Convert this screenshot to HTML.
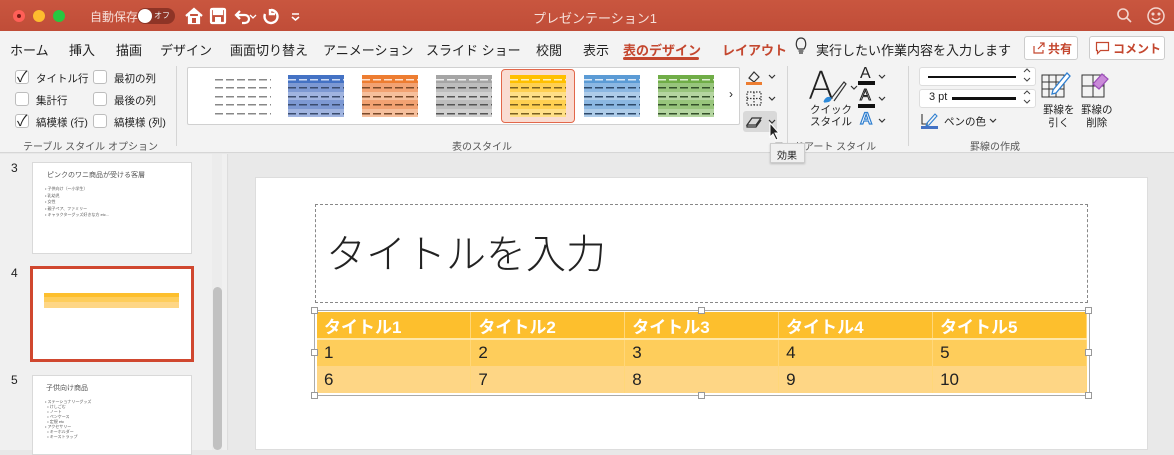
<!DOCTYPE html>
<html><head><meta charset="utf-8"><style>
*{box-sizing:border-box;margin:0;padding:0}
body{width:1174px;height:450px;overflow:hidden;position:relative;background:#e8e8e8;font-family:"Liberation Sans","Noto Sans CJK JP",sans-serif;color:#222}
.a{position:absolute}
.tb{left:0;top:0;width:1174px;height:31px;background:linear-gradient(#c9563f,#c04d38)}
.dot{width:12px;height:12px;border-radius:50%;top:10px}
.tabs{left:0;top:31px;width:1174px;height:33px;background:#f3f3f3}
.t{font-size:13px;top:40px;white-space:nowrap}
.rib{left:0;top:62px;width:1174px;height:91px;background:#f3f3f3;border-bottom:1px solid #d6d6d6}
.cb{width:14px;height:14px;border:1px solid #bdbdbd;border-radius:3px;background:#fff}
.sm{font-size:10.5px;white-space:nowrap}
.gl{font-size:10px;color:#555;top:138px;white-space:nowrap}
.th{position:absolute;top:75px;width:56px;height:42px}
.th div{height:8.4px;background-image:repeating-linear-gradient(90deg,var(--d) 0 8px,transparent 8px 11px);background-size:100% 1.5px;background-repeat:no-repeat;background-position:0 4px}
.vs{width:1px;background:#d5d5d5}
.tbl td{height:27px;padding:0 7px;font-size:17px;border-right:1px solid #ffd779;width:154px}
.h{width:7px;height:7px;background:#fff;border:1px solid #999;position:absolute}
</style></head><body>
<div class="a tb"></div>
<div class="a dot" style="left:13px;background:#ff5f57"></div>
<div class="a" style="left:17px;top:14px;width:4px;height:4px;border-radius:50%;background:#7a1b15"></div>
<div class="a dot" style="left:33px;background:#febc2e"></div>
<div class="a dot" style="left:53px;background:#28c840"></div>
<div class="a sm" style="left:90px;top:8px;color:#f6ddd7;font-size:12px">自動保存</div>
<div class="a" style="left:137px;top:8px;width:38px;height:16px;border-radius:8px;background:#8e3426"></div>
<div class="a" style="left:138px;top:9px;width:14px;height:14px;border-radius:50%;background:#fff"></div>
<div class="a" style="left:154px;top:10px;font-size:8px;color:#eee">オフ</div>
<svg class="a" style="left:184px;top:6px" width="130" height="20" viewBox="0 0 130 20" fill="none" stroke="#fff" stroke-width="2.2">
<path d="M2 10 L10 3 L18 10 M5 8 V17 H15 V8" fill="#fff" stroke="#fff"/><rect x="8" y="12" width="4" height="5" fill="#c4503b" stroke="none"/>
<rect x="27" y="3" width="14" height="14" rx="1"/><rect x="30" y="3" width="8" height="5" fill="#fff"/><rect x="31" y="11" width="6" height="6" fill="#fff" stroke="none"/>
<path d="M56 5 L52 9 L56 13 M52 9 H61 A4 4 0 0 1 61 17 H58"/><path d="M66 9 l3 3 l3-3" stroke-width="1.3"/>
<path d="M87 4 A6.5 6.5 0 1 1 81 8 M86 3 V8 H91" stroke-width="2.4"/>
<path d="M108 8 h7 M108 11 l3.5 3 l3.5-3" stroke-width="1.6"/>
</svg>
<div class="a" style="left:533px;top:8px;font-size:13px;color:#f6e0da">プレゼンテーション1</div>
<svg class="a" style="left:1115px;top:6px" width="20" height="20" fill="none" stroke="#f3d6cf" stroke-width="1.6"><circle cx="8" cy="8" r="5"/><path d="M12 12 l4 4"/></svg>
<svg class="a" style="left:1144px;top:4px" width="24" height="24" fill="none" stroke="#f3d6cf" stroke-width="1.5"><circle cx="12" cy="12" r="8"/><circle cx="9" cy="10" r=".8" fill="#f3d6cf"/><circle cx="15" cy="10" r=".8" fill="#f3d6cf"/><path d="M8 14 q4 4 8 0"/></svg>

<div class="a tabs"></div>
<div class="a t" style="left:10px">ホーム</div>
<div class="a t" style="left:69px">挿入</div>
<div class="a t" style="left:116px">描画</div>
<div class="a t" style="left:160px">デザイン</div>
<div class="a t" style="left:230px">画面切り替え</div>
<div class="a t" style="left:323px">アニメーション</div>
<div class="a t" style="left:426px">スライド ショー</div>
<div class="a t" style="left:536px">校閲</div>
<div class="a t" style="left:583px">表示</div>
<div class="a t" style="left:623px;color:#c4472f;font-weight:bold">表のデザイン</div>
<div class="a" style="left:623px;top:57px;width:76px;height:3px;background:#c4472f;border-radius:2px"></div>
<div class="a t" style="left:722px;color:#c4472f;font-weight:bold">レイアウト</div>
<svg class="a" style="left:794px;top:36px" width="14" height="20" fill="none" stroke="#333" stroke-width="1.2"><path d="M4 13 C1 9 2 2 7 2 C12 2 13 9 10 13 Z M4.5 15 h5 M5 17 h4"/></svg>
<div class="a t" style="left:816px">実行したい作業内容を入力します</div>
<div class="a" style="left:1024px;top:36px;width:54px;height:24px;border:1px solid #ccc;border-radius:3px;background:#fff"></div>
<div class="a" style="left:1048px;top:40px;font-size:12px;color:#c4472f;font-weight:bold">共有</div>
<svg class="a" style="left:1032px;top:41px" width="14" height="14" fill="none" stroke="#c4472f" stroke-width="1.2"><path d="M2 5 v7 h9 v-3 M6 8 l6-6 M8 2 h4 v4"/></svg>
<div class="a" style="left:1089px;top:36px;width:76px;height:24px;border:1px solid #ccc;border-radius:3px;background:#fff"></div>
<svg class="a" style="left:1095px;top:41px" width="16" height="14" fill="none" stroke="#c4472f" stroke-width="1.2"><path d="M1.5 1.5 h12 v8 h-8 l-3 3 v-3 h-1 z"/></svg>
<div class="a" style="left:1113px;top:40px;font-size:12px;color:#c4472f;font-weight:bold">コメント</div>

<div class="a rib"></div>
<div class="a cb" style="left:15px;top:70px"></div><div class="a" style="left:17px;top:66px;font-size:15px">✓</div>
<div class="a sm" style="left:36px;top:71px">タイトル行</div>
<div class="a cb" style="left:15px;top:92px"></div><div class="a sm" style="left:36px;top:93px">集計行</div>
<div class="a cb" style="left:15px;top:114px"></div><div class="a" style="left:17px;top:110px;font-size:15px">✓</div>
<div class="a sm" style="left:36px;top:115px">縞模様 (行)</div>
<div class="a cb" style="left:93px;top:70px"></div><div class="a sm" style="left:114px;top:71px">最初の列</div>
<div class="a cb" style="left:93px;top:92px"></div><div class="a sm" style="left:114px;top:93px">最後の列</div>
<div class="a cb" style="left:93px;top:114px"></div><div class="a sm" style="left:114px;top:115px">縞模様 (列)</div>
<div class="a gl" style="left:23px">テーブル スタイル オプション</div>
<div class="a vs" style="left:176px;top:66px;height:80px"></div>
<div class="a" style="left:187px;top:67px;width:553px;height:58px;background:#fff;border:1px solid #d0d0d0;border-radius:2px"></div>
<div class="a" style="left:501px;top:69px;width:74px;height:54px;background:#f9dcd2;border:1px solid #e2674a;border-radius:4px"></div>
<div class="th" style="left:215px;--d:#888"><div></div><div></div><div></div><div></div><div></div></div>
<div class="th" style="left:288px;--d:#3a4c6e;background:#7391d0"><div style="background-color:#4472c4;--d:#cfdcf5"></div><div style="background-color:#7d99d3"></div><div style="background-color:#a0b4e0"></div><div style="background-color:#7d99d3"></div><div style="background-color:#a0b4e0"></div></div>
<div class="th" style="left:362px;--d:#7a4a2a"><div style="background-color:#ed7d31;--d:#fde1cf"></div><div style="background-color:#f2a272"></div><div style="background-color:#f6bf9c"></div><div style="background-color:#f2a272"></div><div style="background-color:#f6bf9c"></div></div>
<div class="th" style="left:436px;--d:#555"><div style="background-color:#a5a5a5;--d:#eee"></div><div style="background-color:#bdbdbd"></div><div style="background-color:#d0d0d0"></div><div style="background-color:#bdbdbd"></div><div style="background-color:#d0d0d0"></div></div>
<div class="th" style="left:510px;--d:#7a6020"><div style="background-color:#ffc000;--d:#fff1c0"></div><div style="background-color:#ffd051"></div><div style="background-color:#ffdf87"></div><div style="background-color:#ffd051"></div><div style="background-color:#ffdf87"></div></div>
<div class="th" style="left:584px;--d:#2e4a6a"><div style="background-color:#5b9bd5;--d:#dbe9f7"></div><div style="background-color:#8bb7e2"></div><div style="background-color:#aecce9"></div><div style="background-color:#8bb7e2"></div><div style="background-color:#aecce9"></div></div>
<div class="th" style="left:658px;--d:#33502a"><div style="background-color:#70ad47;--d:#e0f0d6"></div><div style="background-color:#98c57c"></div><div style="background-color:#b4d5a0"></div><div style="background-color:#98c57c"></div><div style="background-color:#b4d5a0"></div></div>
<div class="a" style="left:729px;top:87px;font-size:12px">›</div>
<div class="a gl" style="left:452px">表のスタイル</div>
<svg class="a" style="left:744px;top:67px" width="36" height="66" fill="none" stroke="#333" stroke-width="1.2">
<path d="M5 11 l5-6 l5 5 l-5 5 z"/><rect x="2" y="15" width="16" height="3" fill="#ed7d31" stroke="none"/>
<path d="M25 8 l3 3 l3-3"/>
<rect x="3" y="25" width="14" height="13" stroke-dasharray="1.5 1.5"/><path d="M10 25 v13 M3 31.5 h14" stroke-dasharray="1.5 1.5"/>
<path d="M25 30 l3 3 l3-3"/>
</svg>
<div class="a" style="left:743px;top:111px;width:34px;height:21px;background:#d9d9d9;border-radius:3px"></div>
<svg class="a" style="left:744px;top:111px" width="36" height="22" fill="none" stroke="#333" stroke-width="1.2"><path d="M3 14 l5-7 h9 l-5 7 z M3 14 v2 h9 l5-7"/><path d="M25 9 l3 3 l3-3"/></svg>
<div class="a vs" style="left:787px;top:66px;height:80px"></div>
<div class="a" style="left:808px;top:64px;font-size:38px;font-weight:300;color:#222;font-family:'DejaVu Sans',sans-serif">A</div>
<svg class="a" style="left:820px;top:78px" width="40" height="26" fill="none" stroke="#333" stroke-width="1.2"><path d="M10 22 l14-18 l2 2 l-12 17" /><path d="M4 24 q2-6 7-4 q0 4-7 4" fill="#2f8ad8" stroke="#2f8ad8"/><path d="M31 8 l3 3 l3-3"/></svg>
<div class="a sm" style="left:810px;top:104px;text-align:center;line-height:12px">クイック<br>スタイル</div>
<div class="a" style="left:860px;top:65px;font-size:16px">A</div><div class="a" style="left:858px;top:81px;width:17px;height:4px;background:#111"></div>
<div class="a" style="left:860px;top:87px;font-size:16px;color:#fff;-webkit-text-stroke:1px #222">A</div><div class="a" style="left:858px;top:104px;width:17px;height:4px;background:#111"></div>
<div class="a" style="left:860px;top:109px;font-size:17px;font-weight:bold;color:#fff;-webkit-text-stroke:1.2px #2f7fd0">A</div>
<svg class="a" style="left:876px;top:68px" width="14" height="60" fill="none" stroke="#333" stroke-width="1.2"><path d="M3 7 l3 3 l3-3 M3 29 l3 3 l3-3 M3 51 l3 3 l3-3"/></svg>
<div class="a gl" style="left:774px">ワードアート スタイル</div>
<div class="a vs" style="left:908px;top:66px;height:80px"></div>
<div class="a" style="left:919px;top:67px;width:117px;height:19px;background:#fff;border:1px solid #ddd;border-radius:3px"></div>
<div class="a" style="left:928px;top:76px;width:88px;height:2px;background:#111"></div>
<div class="a" style="left:919px;top:89px;width:117px;height:19px;background:#fff;border:1px solid #ddd;border-radius:3px"></div>
<div class="a" style="left:929px;top:91px;font-size:11px">3 pt</div>
<div class="a" style="left:952px;top:97px;width:64px;height:3px;background:#111"></div>
<svg class="a" style="left:1020px;top:67px" width="14" height="42" fill="none" stroke="#444" stroke-width="1"><path d="M4 5 l3-3 l3 3 M4 11 l3 3 l3-3 M4 27 l3-3 l3 3 M4 33 l3 3 l3-3"/></svg>
<svg class="a" style="left:920px;top:112px" width="20" height="18" fill="none" stroke="#333" stroke-width="1.1"><path d="M2 2 v10 h6"/><path d="M7 11 l8-9 l2 2 l-8 9 l-3 1 z" stroke="#2f7fd0"/><rect x="1" y="14" width="17" height="3" fill="#4472c4" stroke="none"/></svg>
<div class="a sm" style="left:944px;top:114px">ペンの色</div>
<svg class="a" style="left:988px;top:115px" width="12" height="12" fill="none" stroke="#333" stroke-width="1.2"><path d="M2 4 l3 3 l3-3"/></svg>
<svg class="a" style="left:1041px;top:68px" width="36" height="30" fill="none" stroke="#333" stroke-width="1"><path d="M1 7 h22 v22 H1 z M1 14 h22 M1 21 h22 M8 7 v22 M15 7 v22"/><path d="M12 22 l14-17 l3 3 l-14 17 l-4 1 z" fill="#fff" stroke="#2f7fd0" stroke-width="1.3"/></svg>
<div class="a sm" style="left:1043px;top:104px;line-height:13px;text-align:center">罫線を<br>引く</div>
<svg class="a" style="left:1081px;top:68px" width="36" height="30" fill="none" stroke="#333" stroke-width="1"><path d="M1 7 h22 v22 H1 z M1 18 h22 M12 7 v22"/><path d="M12 16 l9-10 l6 5 l-9 10 z" fill="#c98ad8" stroke="#9b4cb8" stroke-width="1.2"/></svg>
<div class="a sm" style="left:1081px;top:104px;line-height:13px;text-align:center">罫線の<br>削除</div>
<div class="a gl" style="left:970px">罫線の作成</div>

<div class="a" style="left:0;top:154px;width:228px;height:296px;background:#f0f0f0;border-right:1px solid #ddd"></div>
<div class="a" style="left:212px;top:154px;width:10px;height:296px;background:#ececec"></div>
<div class="a" style="left:213px;top:287px;width:9px;height:163px;background:#c1c1c1;border-radius:5px"></div>
<div class="a" style="left:11px;top:161px;font-size:12px">3</div>
<div class="a" style="left:32px;top:162px;width:160px;height:92px;background:#fff;border:1px solid #d9d9d9"></div>
<div class="a" style="left:47px;top:170px;font-size:7px;color:#555">ピンクのワニ商品が受ける客層</div>
<div class="a" style="left:45px;top:186px;font-size:4px;line-height:6.5px;color:#555">• 子供向け（〜小学生）<br>• 乳幼児<br>• 女性<br>• 親子ペア、ファミリー<br>• キャラクターグッズ好きな方 etc...</div>
<div class="a" style="left:11px;top:266px;font-size:12px">4</div>
<div class="a" style="left:30px;top:266px;width:164px;height:96px;background:#fff;border:3px solid #d0472f"></div>
<div class="a" style="left:44px;top:293px;width:135px;height:15px;background:linear-gradient(#fdbf2d 0 4px,#fecd5b 4px 9px,#fed685 9px)"></div>
<div class="a" style="left:11px;top:373px;font-size:12px">5</div>
<div class="a" style="left:32px;top:375px;width:160px;height:80px;background:#fff;border:1px solid #d9d9d9"></div>
<div class="a" style="left:46px;top:383px;font-size:7px;color:#555">子供向け商品</div>
<div class="a" style="left:45px;top:399px;font-size:4px;line-height:5px;color:#555">• ステーショナリーグッズ<br>&nbsp;&nbsp;• けしごむ<br>&nbsp;&nbsp;• ノート<br>&nbsp;&nbsp;• ペンケース<br>&nbsp;&nbsp;• 定規 etc<br>• アクセサリー<br>&nbsp;&nbsp;• キーホルダー<br>&nbsp;&nbsp;• キーストラップ</div>

<div class="a" style="left:229px;top:154px;width:945px;height:296px;background:#e9e9e9"></div>
<div class="a" style="left:255px;top:177px;width:893px;height:273px;background:#fff;border:1px solid #ddd"></div>
<div class="a" style="left:315px;top:204px;width:773px;height:99px;border:1px dashed #888"></div>
<div class="a" style="left:326px;top:222px;font-size:40px;color:#222;font-weight:300">タイトルを入力</div>
<div class="a" style="left:314px;top:310px;width:776px;height:86px;border:1px solid #aaa"></div>
<table class="a tbl" style="left:317px;top:312px;width:770px;border-collapse:collapse">
<tr style="background:#fdbf2d;color:#fff;font-weight:bold;border-bottom:2px solid #ffe7a8"><td>タイトル1</td><td>タイトル2</td><td>タイトル3</td><td>タイトル4</td><td>タイトル5</td></tr>
<tr style="background:#fecd5b"><td>1</td><td>2</td><td>3</td><td>4</td><td>5</td></tr>
<tr style="background:#fed685"><td>6</td><td>7</td><td>8</td><td>9</td><td>10</td></tr>
</table>
<div class="h" style="left:311px;top:307px"></div>
<div class="h" style="left:698px;top:307px"></div>
<div class="h" style="left:1085px;top:307px"></div>
<div class="h" style="left:311px;top:349px"></div>
<div class="h" style="left:1085px;top:349px"></div>
<div class="h" style="left:311px;top:392px"></div>
<div class="h" style="left:698px;top:392px"></div>
<div class="h" style="left:1085px;top:392px"></div>

<div class="a" style="left:770px;top:143px;width:35px;height:20px;background:#f0f0f0;border:1px solid #ccc;font-size:10px;padding:3px 0 0 6px;box-shadow:0 1px 2px rgba(0,0,0,.2)">効果</div>
<svg class="a" style="left:768px;top:122px" width="14" height="20"><path d="M2 1 V15 L5 12 L8 18 L10 17 L7 11 H11 Z" fill="#222" stroke="#fff" stroke-width="1"/></svg>
</body></html>
